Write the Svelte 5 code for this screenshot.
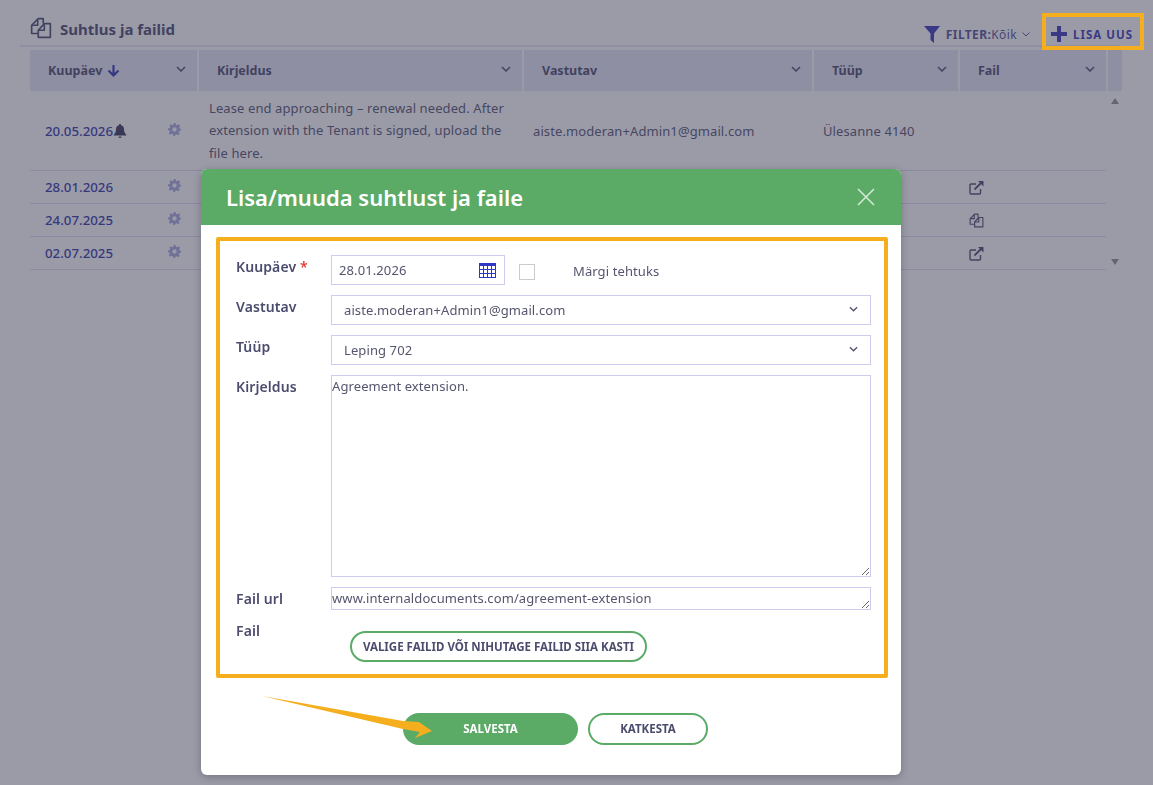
<script>
  const headers = [
    { label: 'Kuupäev', sort: true },
    { label: 'Kirjeldus' },
    { label: 'Vastutav' },
    { label: 'Tüüp' },
    { label: 'Fail' }
  ];
  const rows = [
    { date: '20.05.2026', bell: true, text: 'Lease end approaching – renewal needed. After extension with the Tenant is signed, upload the file here.', who: 'aiste.moderan+Admin1@gmail.com', type: 'Ülesanne 4140', file: '' },
    { date: '28.01.2026', text: '', who: '', type: '', file: 'link' },
    { date: '24.07.2025', text: '', who: '', type: '', file: 'copy' },
    { date: '02.07.2025', text: '', who: '', type: '', file: 'link' }
  ];
</script>

{#snippet chevron()}
  <svg class="chev" width="10" height="6" viewBox="0 0 10 6"><path d="M1 1l4 4 4-4" fill="none" stroke="currentColor" stroke-width="1.5"/></svg>
{/snippet}
{#snippet copyIcon(size)}
  <svg width={size} height={size} viewBox="0 0 20 20" fill="none" stroke="currentColor" stroke-width="1.5" stroke-linejoin="round"><path d="M7.500 15H1.500V7.500L7.500 1.500H12V6"/><path d="M7 2v5.500H2"/><path d="M7.500 12L13 6H18.500V18.500H7.500z"/><path d="M13 6.500V12H8"/></svg>
{/snippet}
{#snippet linkIcon()}
  <svg width="15" height="15" viewBox="0 0 15 15" fill="none" stroke="currentColor" stroke-width="1.400"><path d="M11.500 9v4a1 1 0 0 1-1 1H2a1 1 0 0 1-1-1V5a1 1 0 0 1 1-1h5"/><path d="M5.500 9.500L13 2" stroke-width="1.800"/><path d="M9 1h5.500v5.500z" fill="currentColor" stroke="none"/></svg>
{/snippet}

<div class="page">
  <header class="top">
    <div class="title">
      <span class="title-icon">{@render copyIcon(22)}</span>
      <h2>Suhtlus ja failid</h2>
    </div>
    <div class="actions">
      <svg class="funnel" width="16" height="17" viewBox="0 0 16 17"><path d="M0 0h16L10 7.500V17L6.500 14V7.500z" fill="currentColor"/></svg>
      <span class="filter"><b>FILTER:</b>Kõik</span>
      <svg class="mini" width="8" height="5" viewBox="0 0 8 5"><path d="M.5.500L4 4 7.500.5" fill="none" stroke="currentColor"/></svg>
      <button class="add">
        <svg width="16" height="16" viewBox="0 0 16 16"><path d="M6 0h4v6h6v4h-6v6H6v-6H0V6h6z" fill="currentColor"/></svg>
        LISA UUS
      </button>
    </div>
  </header>

  <div class="table-wrap">
    <div class="table">
      <div class="thead">
        {#each headers as h}
          <div class="th">
            <span>{h.label}</span>
            {#if h.sort}
              <svg class="arrow" width="13" height="13" viewBox="0 0 13 13"><path d="M6.500 1v10M1.500 6.500l5 5 5-5" fill="none" stroke="currentColor" stroke-width="2.200"/></svg>
            {/if}
            {@render chevron()}
          </div>
        {/each}
      </div>
      <div class="scroll-head"></div>
      <div class="tbody">
        {#each rows as r, i}
          <div class="tr" class:first={i === 0}>
            <div class="td date">
              <a href="#top">{r.date}</a>
              {#if r.bell}
                <svg class="bell" width="14" height="14" viewBox="0 0 14 14"><path d="M7 0a1 1 0 0 1 1 1.200c2.200.5 3 2.300 3 4.300 0 2.500 1 3.800 2.300 5.300v.7H.7v-.7C2 9.300 3 8 3 5.500c0-2 .8-3.800 3-4.300A1 1 0 0 1 7 0zM5.500 12.500h3a1.500 1.500 0 0 1-3 0z" fill="currentColor"/></svg>
              {/if}
              <svg class="gear" width="13" height="13" viewBox="0 0 24 24"><path fill-rule="evenodd" d="M10 0h4l.7 3.300 2.400 1 2.900-1.800L22.500 5l-1.800 2.900 1 2.400L24 11v3l-3.300.7-1 2.400 1.800 2.900-2.500 2.500-2.900-1.800-2.400 1L13 24h-3l-.7-3.300-2.400-1L4 21.500 1.500 19l1.800-2.900-1-2.400L0 13v-3l3.300-.7 1-2.400L2.500 5 5 2.500l2.900 1.800 2.400-1zM12 8a4 4 0 1 0 0 8 4 4 0 0 0 0-8z" fill="currentColor"/></svg>
            </div>
            <div class="td desc">{r.text}</div>
            <div class="td who">{r.who}</div>
            <div class="td type">{r.type}</div>
            <div class="td file">
              {#if r.file === 'link'}{@render linkIcon()}{:else if r.file === 'copy'}{@render copyIcon(15)}{/if}
            </div>
          </div>
        {/each}
      </div>
      <div class="scrollbar">
        <span class="up"></span>
        <span class="down"></span>
      </div>
    </div>
  </div>
</div>

<div class="overlay">
  <div class="modal">
    <div class="modal-head">
      <h1>Lisa/muuda suhtlust ja faile</h1>
      <svg width="18" height="18" viewBox="0 0 18 18"><path d="M1 1l16 16M17 1L1 17" stroke="currentColor" stroke-width="1.500" fill="none"/></svg>
    </div>
    <form class="form">
      <div class="row r-date">
        <label for="d">Kuupäev <i>*</i></label>
        <div class="date-line">
          <div class="date-input">
            <span id="d">28.01.2026</span>
            <svg width="17" height="15" viewBox="0 0 17 15"><rect x=".5" y=".5" width="16" height="14" fill="#fff" stroke="#3136c4"/><rect width="17" height="3" fill="#3136c4"/><path d="M0 6.500h17M0 10.500h17M4.500 0v15M8.500 0v15M12.500 0v15" stroke="#3136c4"/></svg>
          </div>
          <span class="check"></span>
          <span class="check-label">Märgi tehtuks</span>
        </div>
      </div>
      <div class="row r-sel">
        <label for="v">Vastutav</label>
        <div class="select" id="v"><span>aiste.moderan+Admin1@gmail.com</span>{@render chevron()}</div>
      </div>
      <div class="row r-sel">
        <label for="t">Tüüp</label>
        <div class="select" id="t"><span>Leping 702</span>{@render chevron()}</div>
      </div>
      <div class="row r-area">
        <label for="k">Kirjeldus</label>
        <textarea id="k" class="area">Agreement extension.</textarea>
      </div>
      <div class="row r-url">
        <label for="u">Fail url</label>
        <textarea id="u" class="url">www.internaldocuments.com/agreement-extension</textarea>
      </div>
      <div class="row r-file">
        <span class="lab">Fail</span>
        <button type="button" class="pick">VALIGE FAILID VÕI NIHUTAGE FAILID SIIA KASTI</button>
      </div>
    </form>
    <div class="foot">
      <button class="save">SALVESTA</button>
      <button class="cancel">KATKESTA</button>
    </div>
  </div>
</div>

<div class="mark"></div>
<svg class="pointer" width="172" height="44" viewBox="0 0 172 44"><path d="M0 0L141 25 157 26 170 35 153 42 158 36 141 33z" fill="#f5ae1e"/></svg>

<style>
  :global(body) {
    margin: 0;
    background: #fff;
    font-family: "Noto Sans", "Open Sans", sans-serif;
    color: #55556f;
    font-size: 13px;
    letter-spacing: .1px;
  }
  .page {
    height: 785px;
    box-sizing: border-box;
    padding: 16px 0 0 20px;
    overflow: hidden;
  }
  .top {
    width: 1100px;
    height: 29px;
    display: flex;
    align-items: flex-start;
    justify-content: space-between;
    border-bottom: 2px solid #e7e7f0;
  }
  .title {
    display: flex;
    align-items: center;
    gap: 8px;
    padding-left: 10px;
    color: #4c4c6e;
  }
  .title-icon { display: flex; margin-top: -3px; }
  h2 {
    margin: 0;
    font-size: 15px;
    font-weight: 700;
    line-height: 26px;
    letter-spacing: 0;
    color: #4c4c6e;
  }
  .actions {
    display: flex;
    align-items: center;
    color: #3a3ab8;
    height: 30px;
    margin: 3px -13px 0 0;
  }
  .funnel { margin-right: 6px; }
  .filter { font-size: 12px; letter-spacing: .4px; color: #55559a; }
  .filter b { font-weight: 700; }
  .mini { margin: 1px 0 0 5px; color: #55559a; }
  .add {
    all: unset;
    display: flex;
    align-items: center;
    gap: 6px;
    margin-left: 21px;
    font-size: 11.500px;
    font-weight: 700;
    letter-spacing: 1px;
    color: #3a3ab8;
  }
  .table-wrap { padding: 3px 0 0 10px; }
  .table {
    width: 1092px;
    display: grid;
    grid-template-columns: 1076px 16px;
    position: relative;
  }
  .thead {
    display: grid;
    grid-template-columns: 167px 323px 288px 144px 146px;
    gap: 2px;
  }
  .scroll-head { background: #e7e7f5; margin-left: 2px; }
  .th {
    height: 41px;
    background: #e7e7f5;
    display: flex;
    align-items: center;
    padding: 0 11px 0 18px;
    font-weight: 700;
    font-size: 12.500px;
    letter-spacing: 0;
    color: #4c4c6e;
  }
  .th .chev { margin-left: auto; margin-top: -3px; color: #4c4c6e; }
  .arrow { margin-left: 5px; color: #3539b0; }
  .tbody { grid-column: 1; }
  .tr {
    display: grid;
    grid-template-columns: 169px 324px 290px 146px 147px;
    height: 33px;
    box-sizing: border-box;
    align-items: center;
    border-bottom: 1px solid #dcdcf0;
  }
  .tr.first { height: 80px; }
  .td { padding-left: 10px; color: #55556f; }
  .date {
    display: flex;
    align-items: center;
    padding-left: 15px;
    position: relative;
    font-weight: 500;
    font-size: 13.300px;
    letter-spacing: 0;
  }
  .date a { color: #3539a8; text-decoration: none; }
  .bell { color: #3a3a5c; }
  .gear { position: absolute; left: 138px; top: 50%; margin-top: -8px; color: #aaaadd; }
  .desc { line-height: 22.500px; padding-right: 12px; }
  .file { display: flex; color: #4c4c6e; }
  .scrollbar { position: relative; grid-column: 2; }
  .up, .down {
    position: absolute;
    left: 5px;
    border-left: 4.500px solid transparent;
    border-right: 4.500px solid transparent;
  }
  .up { top: 7px; border-bottom: 6px solid #909098; }
  .down { top: 168px; border-top: 6px solid #909098; }

  .overlay {
    position: fixed;
    inset: 0;
    background: rgba(55, 55, 81, .5);
  }
  .modal {
    position: absolute;
    left: 201px;
    top: 169px;
    width: 700px;
    height: 606px;
    background: #fff;
    border-radius: 6px;
    overflow: hidden;
    box-shadow: 0 2px 8px rgba(0, 0, 0, .25);
  }
  .modal-head {
    height: 56px;
    background: #5bab67;
    color: #fff;
    display: flex;
    align-items: center;
    justify-content: space-between;
    padding: 0 26px 0 25px;
  }
  .modal-head h1 { margin: 0; font-size: 22px; font-weight: 600; letter-spacing: 0; }
  .modal-head svg { color: #d6ecd9; }
  .form {
    margin: 12px 0 0 15px;
    width: 672px;
    height: 441px;
    box-sizing: border-box;
    border: 4px solid #f5ae1e;
    border-radius: 2px;
    padding: 14px 13px 0 16px;
  }
  .row {
    display: grid;
    grid-template-columns: 95px 1fr;
    margin-bottom: 10px;
  }
  label, .lab {
    font-weight: 600;
    font-size: 14px;
    color: #4c4c6e;
    line-height: 18px;
    padding-top: 3px;
  }
  label i { color: #e53935; font-style: normal; }
  .date-line { display: flex; align-items: flex-start; height: 30px; }
  .date-input {
    width: 174px;
    height: 30px;
    box-sizing: border-box;
    border: 1px solid #ccccec;
    display: flex;
    align-items: center;
    justify-content: space-between;
    padding: 0 8px 0 7px;
    color: #55556f;
  }
  .check {
    width: 16px;
    height: 16px;
    box-sizing: border-box;
    border: 1px solid #ccc;
    margin: 9px 0 0 14px;
  }
  .check-label { margin: 7px 0 0 38px; line-height: 18px; color: #55556f; }
  .select {
    height: 30px;
    box-sizing: border-box;
    border: 1px solid #ccccec;
    display: flex;
    align-items: center;
    justify-content: space-between;
    padding: 0 12px;
    color: #55556f;
  }
  .select .chev { color: #55556f; margin-top: -3px; width: 9px; }
  textarea {
    display: block;
    box-sizing: border-box;
    width: 100%;
    margin: 0;
    padding: 1px 0 0;
    border: 1px solid #ccccec;
    font: 13px/18px "Noto Sans", "Open Sans", sans-serif;
    letter-spacing: .1px;
    color: #55556f;
    outline: 0;
  }
  .area { height: 202px; }
  .url { height: 23px; }
  .r-file { margin: 0; padding-top: 11px; }
  .r-file .lab { margin-top: -9px; padding-top: 0; }
  .pick {
    all: unset;
    justify-self: start;
    margin: 0 0 0 19px;
    width: 297px;
    height: 31px;
    box-sizing: border-box;
    border: 2px solid #5bab67;
    border-radius: 16px;
    text-align: center;
    font-size: 11.500px;
    font-weight: 700;
    letter-spacing: 0;
    line-height: 27px;
    color: #4c4c6e;
  }
  .foot {
    display: flex;
    gap: 10px;
    margin: 35px 0 0 202px;
  }
  .foot button {
    all: unset;
    box-sizing: border-box;
    height: 32px;
    border-radius: 16px;
    text-align: center;
    font-size: 11.500px;
    font-weight: 700;
    letter-spacing: 0;
    line-height: 32px;
  }
  .foot .save { width: 175px; background: #5bab67; color: #fff; }
  .foot .cancel {
    width: 120px;
    border: 2px solid #5bab67;
    line-height: 28px;
    color: #4c4c6e;
  }
  .mark {
    position: absolute;
    left: 1042px;
    top: 13px;
    width: 102px;
    height: 37px;
    box-sizing: border-box;
    border: 4px solid #f5ae1e;
  }
  .pointer { position: absolute; left: 262px; top: 696px; }
</style>
